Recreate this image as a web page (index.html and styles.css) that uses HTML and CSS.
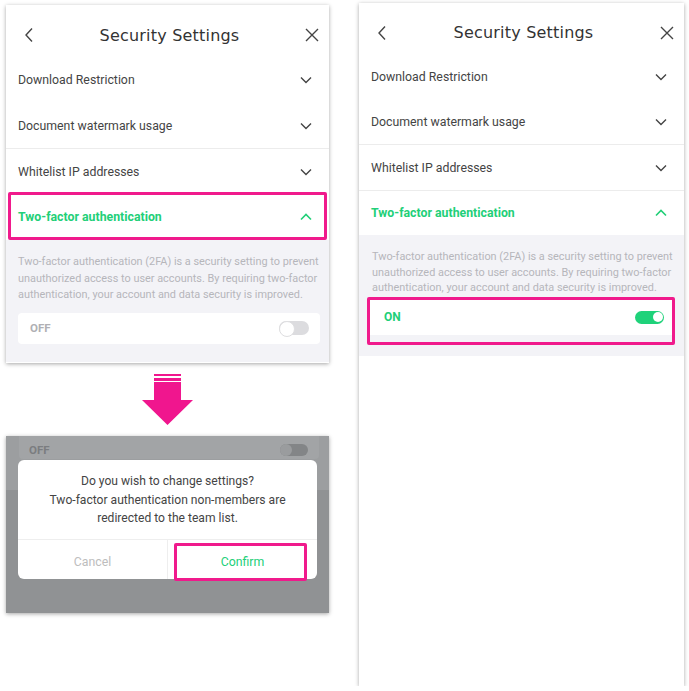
FILE: index.html
```html
<!DOCTYPE html>
<html lang="en">
<head>
<meta charset="utf-8">
<title>Security Settings</title>
<link rel="stylesheet" href="styles.css">
</head>
<body>
<div class="page">
  <div class="col-left">
    <section class="phone phone-a">
      <header class="bar">
        <svg class="ic-back" width="10" height="16" viewBox="0 0 10 16"><path d="M8 1.5 L2 8 L8 14.5" fill="none" stroke="#444" stroke-width="1.4"/></svg>
        <h1 class="title">Security Settings</h1>
        <svg class="ic-close" width="14" height="14" viewBox="0 0 14 14"><path d="M1 1 L13 13 M13 1 L1 13" fill="none" stroke="#444" stroke-width="1.4"/></svg>
      </header>
      <div class="row">Download Restriction<svg class="chev" width="12" height="8" viewBox="0 0 12 8"><path d="M1 1.5 L6 6.5 L11 1.5" fill="none" stroke="#444" stroke-width="1.4"/></svg></div>
      <div class="row sep">Document watermark usage<svg class="chev" width="12" height="8" viewBox="0 0 12 8"><path d="M1 1.5 L6 6.5 L11 1.5" fill="none" stroke="#444" stroke-width="1.4"/></svg></div>
      <div class="row r3">Whitelist IP addresses<svg class="chev" width="12" height="8" viewBox="0 0 12 8"><path d="M1 1.5 L6 6.5 L11 1.5" fill="none" stroke="#444" stroke-width="1.4"/></svg></div>
      <div class="row open">Two-factor authentication<svg class="chev" width="12" height="8" viewBox="0 0 12 8"><path d="M1 6.5 L6 1.5 L11 6.5" fill="none" stroke="#22cf78" stroke-width="1.6"/></svg><span class="mark mark-row"></span></div>
      <div class="detail">
        <p class="desc">Two-factor authentication (2FA) is a security setting to prevent unauthorized access to user accounts. By requiring two-factor authentication, your account and data security is improved.</p>
        <div class="switch-card">
          <span class="state off">OFF</span>
          <span class="toggle toggle-off"></span>
        </div>
      </div>
    </section>

    <svg class="arrow" width="52" height="52" viewBox="0 0 52 52">
      <rect x="12" y="0" width="27" height="2" fill="#f0168e"/>
      <rect x="12" y="4" width="27" height="3" fill="#f0168e"/>
      <path d="M12 8 H39 V26 H51 L25.5 51 L0 26 H12 Z" fill="#f0168e"/>
    </svg>

    <section class="phone phone-dim">
      <div class="dim-band">
        <div class="dim-card">
          <span class="state dim-state">OFF</span>
          <span class="toggle dim-toggle"></span>
        </div>
      </div>
      <div class="dialog">
        <p class="dialog-msg">Do you wish to change settings?<br>Two-factor authentication non-members are<br>redirected to the team list.</p>
        <div class="dialog-btns">
          <span class="btn cancel">Cancel</span>
          <span class="btn confirm">Confirm<span class="mark mark-btn"></span></span>
        </div>
      </div>
    </section>
  </div>

  <section class="phone phone-b">
    <header class="bar bar-b">
      <svg class="ic-back" width="10" height="16" viewBox="0 0 10 16"><path d="M8 1.5 L2 8 L8 14.5" fill="none" stroke="#444" stroke-width="1.4"/></svg>
      <h1 class="title">Security Settings</h1>
      <svg class="ic-close" width="14" height="14" viewBox="0 0 14 14"><path d="M1 1 L13 13 M13 1 L1 13" fill="none" stroke="#444" stroke-width="1.4"/></svg>
    </header>
    <div class="row b1">Download Restriction<svg class="chev" width="12" height="8" viewBox="0 0 12 8"><path d="M1 1.5 L6 6.5 L11 1.5" fill="none" stroke="#444" stroke-width="1.4"/></svg></div>
    <div class="row sep b2">Document watermark usage<svg class="chev" width="12" height="8" viewBox="0 0 12 8"><path d="M1 1.5 L6 6.5 L11 1.5" fill="none" stroke="#444" stroke-width="1.4"/></svg></div>
    <div class="row sep b3">Whitelist IP addresses<svg class="chev" width="12" height="8" viewBox="0 0 12 8"><path d="M1 1.5 L6 6.5 L11 1.5" fill="none" stroke="#444" stroke-width="1.4"/></svg></div>
    <div class="row open b4">Two-factor authentication<svg class="chev" width="12" height="8" viewBox="0 0 12 8"><path d="M1 6.5 L6 1.5 L11 6.5" fill="none" stroke="#22cf78" stroke-width="1.6"/></svg></div>
    <div class="detail detail-b">
      <p class="desc desc-b">Two-factor authentication (2FA) is a security setting to prevent unauthorized access to user accounts. By requiring two-factor authentication, your account and data security is improved.</p>
      <div class="switch-card card-b">
        <span class="state on">ON</span>
        <span class="toggle toggle-on"></span>
        <span class="mark mark-card"></span>
      </div>
    </div>
  </section>
</div>
</body>
</html>
```

FILE: styles.css
```css
* { box-sizing: border-box; }
html, body { margin: 0; padding: 0; background: #fff; }
body { font-family: Roboto, "Liberation Sans", sans-serif; color: #444; }

.page {
  display: flex;
  align-items: flex-start;
  padding-left: 6px;
}

.col-left {
  width: 323px;
  margin-top: 5px;
  display: flex;
  flex-direction: column;
}

.phone {
  position: relative;
  background: #fff;
  box-shadow: 0 1px 4px rgba(0,0,0,0.35);
}

.phone-a { height: 358px; }

.phone-b {
  width: 325px;
  height: 683px;
  margin-left: 30px;
  margin-top: 3px;
}

.bar {
  height: 52px;
  display: flex;
  align-items: center;
  justify-content: space-between;
  padding: 8px 10px 0 18px;
}
.bar-b { height: 51px; padding: 8px 10px 0 18px; }

.title {
  margin: 0;
  font-family: "DejaVu Sans", sans-serif;
  font-weight: normal;
  font-size: 16px;
  letter-spacing: 0.2px;
  color: #333;
}

.ic-back, .ic-close { display: block; }

.row {
  position: relative;
  height: 46px;
  display: flex;
  align-items: center;
  justify-content: space-between;
  padding: 0 17px 0 12px;
  font-size: 12.3px;
  color: #444;
}
.row .chev { display: block; }

.sep { border-bottom: 1px solid #ececec; }
.r3 { height: 45px; }

.open {
  color: #22cf78;
  font-weight: bold;
  font-size: 12.3px;
}

.b1 { height: 46px; }
.b2 { height: 45px; }
.b3 { height: 46px; }
.b4 { height: 44px; }

.mark {
  position: absolute;
  border: 3px solid #f01a8c;
  border-radius: 2px;
}
.mark-row { top: -2px; left: 2px; right: 2px; bottom: 0; }

.detail {
  background: #f3f3f7;
  height: 122px;
  padding: 14px 9px 0 12px;
}
.detail-b { height: 121px; padding: 14px 11px 0 13px; }

.desc {
  margin: 0 0 9px;
  font-size: 10.9px;
  line-height: 16.5px;
  color: #b6b6bb;
}
.desc-b { line-height: 15.5px; margin-bottom: 4px; }

.switch-card {
  position: relative;
  background: #fff;
  border-radius: 4px;
  height: 31px;
  display: flex;
  align-items: center;
  justify-content: space-between;
  padding: 0 11px 0 12px;
}
.card-b {
  height: 35px;
  margin-left: -2px;
  padding: 0 9px 0 14px;
  border-radius: 0;
}
.mark-card { top: -3px; left: -3px; right: -2px; bottom: -10px; }

.state { font-size: 11.5px; font-weight: bold; }
.off { color: #b0b0b4; }
.on { color: #22cf78; font-size: 12px; }

.toggle {
  position: relative;
  display: block;
  border-radius: 8px;
}
.toggle::after {
  content: "";
  position: absolute;
  border-radius: 50%;
  background: #fff;
}
.toggle-off { width: 30px; height: 14px; background: #dcdcdf; }
.toggle-off::after { left: 0; top: 0; width: 14px; height: 14px; border: 1px solid #dedee0; }
.toggle-on { width: 29px; height: 13px; background: #1fd27a; }
.toggle-on::after { right: 1.5px; top: 1.5px; width: 10px; height: 10px; }

.arrow {
  display: block;
  align-self: center;
  margin-top: 11px;
}

.phone-dim {
  margin-top: 10px;
  height: 177px;
  background: #909294;
  overflow: hidden;
}
.dim-band {
  height: 54px;
  background: #9c9ea0;
  padding: 0 10px 0 13px;
}
.dim-card {
  height: 23px;
  background: #a2a4a6;
  display: flex;
  align-items: center;
  justify-content: space-between;
  padding: 4px 11px 0 10px;
  border-radius: 0 0 4px 4px;
}
.dim-state { color: #7b7d80; font-size: 11.5px; }
.dim-toggle { width: 28px; height: 12px; background: #838587; }
.dim-toggle::after { left: 0; top: 0; width: 12px; height: 12px; background: #9a9c9e; }

.dialog {
  position: absolute;
  left: 12px;
  top: 24px;
  width: 299px;
  height: 119px;
  background: #fff;
  border-radius: 6px;
  display: flex;
  flex-direction: column;
}
.dialog-msg {
  margin: 0;
  height: 80px;
  padding-top: 12px;
  text-align: center;
  font-size: 12.1px;
  line-height: 18.5px;
  color: #444;
  border-bottom: 1px solid #eeeeee;
}
.dialog-btns {
  flex: 1;
  display: flex;
}
.btn {
  position: relative;
  flex: 1;
  display: flex;
  align-items: center;
  justify-content: center;
  padding-top: 4px;
  font-size: 12.3px;
}
.cancel { color: #bdbdbd; border-right: 1px solid #eeeeee; }
.confirm { color: #22cf78; }
.mark-btn { top: 3px; left: 6px; right: 10px; bottom: -2px; }
```
